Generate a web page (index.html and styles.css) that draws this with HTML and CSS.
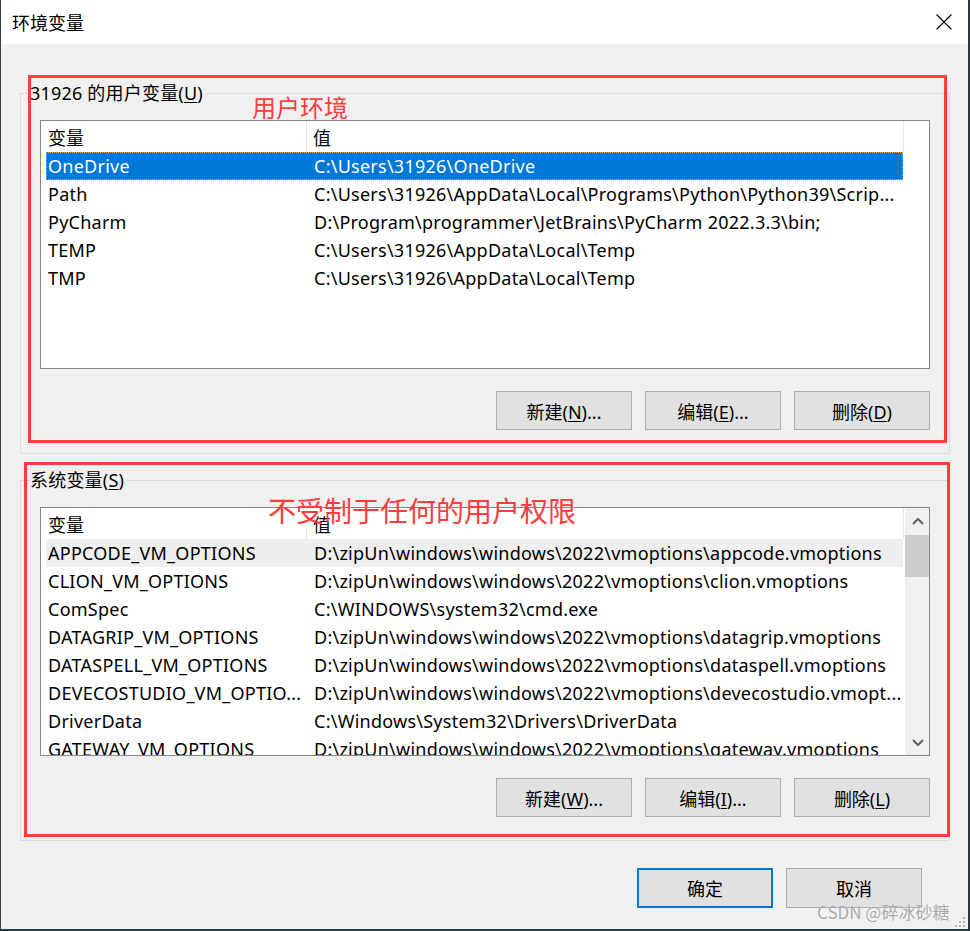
FILE: index.html
```html
<!DOCTYPE html>
<html lang="zh-CN">

<head>
    <meta charset="UTF-8">
    <meta name="viewport" content="width=device-width, initial-scale=1.0">
    <title>环境变量</title>
    <link rel="stylesheet" href="styles.css">
</head>

<body>
    <div class="window">
        <div class="titlebar">
            <span class="title">环境变量</span>
            <svg class="close" width="16" height="16" viewBox="0 0 16 16">
                <path d="M0.5 0.5 L15.5 15.5 M15.5 0.5 L0.5 15.5" stroke="#000" stroke-width="1.1" fill="none" />
            </svg>
        </div>

        <div class="content">
            <fieldset class="group">
                <legend>31926 的用户变量(<u>U</u>)</legend>
                <div class="list">
                    <div class="list-main">
                        <div class="list-head">
                            <div class="h1">变量</div>
                            <div class="h2">值</div>
                        </div>
                        <div class="row selected">
                            <div class="c1">OneDrive</div>
                            <div class="c2">C:\Users\31926\OneDrive</div>
                        </div>
                        <div class="row">
                            <div class="c1">Path</div>
                            <div class="c2">C:\Users\31926\AppData\Local\Programs\Python\Python39\Scrip...</div>
                        </div>
                        <div class="row">
                            <div class="c1">PyCharm</div>
                            <div class="c2">D:\Program\programmer\JetBrains\PyCharm 2022.3.3\bin;</div>
                        </div>
                        <div class="row">
                            <div class="c1">TEMP</div>
                            <div class="c2">C:\Users\31926\AppData\Local\Temp</div>
                        </div>
                        <div class="row">
                            <div class="c1">TMP</div>
                            <div class="c2">C:\Users\31926\AppData\Local\Temp</div>
                        </div>
                    </div>
                </div>
                <div class="buttons">
                    <button class="btn">新建(<u>N</u>)...</button>
                    <button class="btn">编辑(<u>E</u>)...</button>
                    <button class="btn">删除(<u>D</u>)</button>
                </div>
            </fieldset>

            <fieldset class="group group-sys">
                <legend>系统变量(<u>S</u>)</legend>
                <div class="list">
                    <div class="list-main">
                        <div class="list-head">
                            <div class="h1">变量</div>
                            <div class="h2">值</div>
                        </div>
                        <div class="row inactive">
                            <div class="c1">APPCODE_VM_OPTIONS</div>
                            <div class="c2">D:\zipUn\windows\windows\2022\vmoptions\appcode.vmoptions</div>
                        </div>
                        <div class="row">
                            <div class="c1">CLION_VM_OPTIONS</div>
                            <div class="c2">D:\zipUn\windows\windows\2022\vmoptions\clion.vmoptions</div>
                        </div>
                        <div class="row">
                            <div class="c1">ComSpec</div>
                            <div class="c2">C:\WINDOWS\system32\cmd.exe</div>
                        </div>
                        <div class="row">
                            <div class="c1">DATAGRIP_VM_OPTIONS</div>
                            <div class="c2">D:\zipUn\windows\windows\2022\vmoptions\datagrip.vmoptions</div>
                        </div>
                        <div class="row">
                            <div class="c1">DATASPELL_VM_OPTIONS</div>
                            <div class="c2">D:\zipUn\windows\windows\2022\vmoptions\dataspell.vmoptions</div>
                        </div>
                        <div class="row">
                            <div class="c1">DEVECOSTUDIO_VM_OPTIO...</div>
                            <div class="c2">D:\zipUn\windows\windows\2022\vmoptions\devecostudio.vmopt...</div>
                        </div>
                        <div class="row">
                            <div class="c1">DriverData</div>
                            <div class="c2">C:\Windows\System32\Drivers\DriverData</div>
                        </div>
                        <div class="row">
                            <div class="c1">GATEWAY_VM_OPTIONS</div>
                            <div class="c2">D:\zipUn\windows\windows\2022\vmoptions\gateway.vmoptions</div>
                        </div>
                    </div>
                    <div class="scrollbar">
                        <div class="arrow">
                            <svg width="12" height="8" viewBox="0 0 12 8">
                                <path d="M1 7 L6 2 L11 7" stroke="#606060" stroke-width="2" fill="none" />
                            </svg>
                        </div>
                        <div class="thumb"></div>
                        <div class="track"></div>
                        <div class="arrow">
                            <svg width="12" height="8" viewBox="0 0 12 8">
                                <path d="M1 1 L6 6 L11 1" stroke="#606060" stroke-width="2" fill="none" />
                            </svg>
                        </div>
                    </div>
                </div>
                <div class="buttons">
                    <button class="btn">新建(<u>W</u>)...</button>
                    <button class="btn">编辑(<u>I</u>)...</button>
                    <button class="btn">删除(<u>L</u>)</button>
                </div>
            </fieldset>

            <div class="footer">
                <button class="btn btn-default">确定</button>
                <button class="btn">取消</button>
            </div>
        </div>

        <!-- red annotations drawn over the dialog -->
        <div class="mark mark-user"></div>
        <div class="note note-user">用户环境</div>
        <div class="mark mark-sys"></div>
        <div class="note note-sys">不受制于任何的用户权限</div>

        <div class="watermark">CSDN @碎冰砂糖</div>
        <svg class="grip" width="11" height="11" viewBox="0 0 11 11">
            <rect x="8" y="0" width="2" height="2" fill="#b4b4b4" />
            <rect x="4" y="4" width="2" height="2" fill="#b4b4b4" />
            <rect x="8" y="4" width="2" height="2" fill="#b4b4b4" />
            <rect x="0" y="8" width="2" height="2" fill="#b4b4b4" />
            <rect x="4" y="8" width="2" height="2" fill="#b4b4b4" />
            <rect x="8" y="8" width="2" height="2" fill="#b4b4b4" />
        </svg>
    </div>
</body>

</html>
```

FILE: styles.css
```css
* {
    margin: 0;
    padding: 0;
    box-sizing: border-box;
}

body {
    background-color: #26323f;
    font-family: "Noto Sans", "Noto Sans CJK SC", sans-serif;
    font-size: 18px;
    color: #000;
}

u {
    text-decoration-thickness: 1px;
    text-underline-offset: 2px;
}

.window {
    position: relative;
    width: 969px;
    height: 930px;
    background-color: #f0f0f0;
    border: 1px solid #2f3b48;
    border-top: none;
}

.titlebar {
    height: 44px;
    background-color: #fff;
    display: flex;
    align-items: center;
    justify-content: space-between;
    padding: 0 16px 0 11px;
}

.title {
    font-family: "Noto Sans CJK SC", sans-serif;
    font-size: 18px;
    line-height: 24px;
}

.content {
    padding: 0 18px 0 19px;
}

.group {
    min-width: 0;
    margin-top: 37px;
    border: 1px solid #dcdcdc;
    padding: 0 19px 23px;
}

.group-sys {
    margin-top: 14px;
}

.group legend {
    margin-left: -10px;
    padding: 0 3px 0 0;
    line-height: 24px;
    letter-spacing: 0.2px;
}

.list {
    margin-top: 15px;
    height: 249px;
    border: 1px solid #828790;
    background-color: #fff;
    display: flex;
    overflow: hidden;
}

.list-main {
    width: 864px;
    flex-shrink: 0;
    white-space: nowrap;
}

.list-head {
    display: flex;
    height: 31px;
    align-items: center;
}

.list-head .h1 {
    width: 266px;
    height: 100%;
    padding-left: 7px;
    border-right: 1px solid #e5e5e5;
    display: flex;
    align-items: center;
}

.list-head .h2 {
    width: 597px;
    height: 100%;
    padding-left: 6px;
    border-right: 1px solid #e5e5e5;
    display: flex;
    align-items: center;
}

.row {
    display: flex;
    align-items: center;
    height: 28px;
    margin: 0 2px 0 5px;
    letter-spacing: 0.25px;
}

.row .c1 {
    width: 261px;
    padding-left: 2px;
    overflow: hidden;
}

.row .c2 {
    flex: 1;
    padding-left: 7px;
    overflow: hidden;
}

.row.selected {
    background-color: #0078d7;
    color: #fff;
    outline: 1px dotted #e9a25a;
    outline-offset: -1px;
}

.row.inactive {
    background-color: #efefef;
}

.scrollbar {
    width: 25px;
    flex-shrink: 0;
    margin-left: auto;
    background-color: #f0f0f0;
    display: flex;
    flex-direction: column;
}

.scrollbar .arrow {
    height: 25px;
    display: flex;
    align-items: center;
    justify-content: center;
}

.scrollbar .thumb {
    margin-top: 2px;
    height: 42px;
    background-color: #cdcdcd;
}

.scrollbar .track {
    flex: 1;
}

.buttons {
    margin-top: 22px;
    display: flex;
    justify-content: flex-end;
    gap: 13px;
}

.btn {
    width: 136px;
    height: 39px;
    background-color: #e1e1e1;
    border: 1px solid #adadad;
    font-family: "Noto Sans", "Noto Sans CJK SC", sans-serif;
    font-size: 18px;
    color: #000;
}

.footer {
    margin-top: 27px;
    padding-right: 28px;
    display: flex;
    justify-content: flex-end;
    gap: 13px;
}

.footer .btn {
    height: 40px;
}

.btn-default {
    border: 2px solid #0078d7;
}

.mark {
    position: absolute;
    border: 3px solid #ff3c3c;
}

.mark-user {
    left: 27px;
    top: 75px;
    width: 919px;
    height: 368px;
}

.mark-sys {
    left: 23px;
    top: 462px;
    width: 926px;
    height: 375px;
}

.note {
    position: absolute;
    color: #ff3c3c;
    font-family: "Noto Sans CJK SC", sans-serif;
    line-height: 1;
}

.note-user {
    left: 251px;
    top: 95px;
    font-size: 24px;
}

.note-sys {
    left: 267px;
    top: 496px;
    font-size: 28px;
}

.watermark {
    position: absolute;
    left: 816px;
    top: 901px;
    font-family: "Noto Sans CJK SC", sans-serif;
    font-size: 17px;
    line-height: 22px;
    color: rgba(140, 140, 140, 0.75);
    text-shadow: 0 0 1px #fff;
}

.grip {
    position: absolute;
    left: 954px;
    top: 917px;
}
```
